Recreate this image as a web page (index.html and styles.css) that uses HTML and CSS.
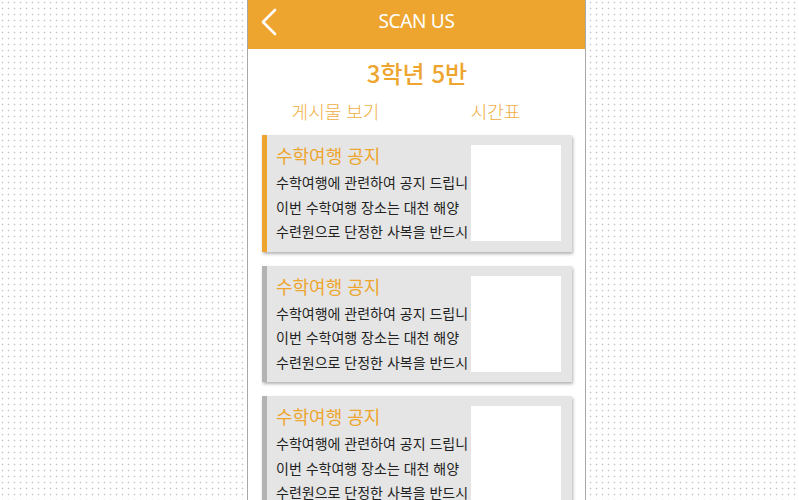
FILE: index.html
```html
<!DOCTYPE html>
<html lang="ko">
<head>
<meta charset="utf-8">
<title>SCAN US</title>
<link rel="stylesheet" href="styles.css">
</head>
<body>
<div class="phone">
  <header class="topbar">
    <button class="back" aria-label="back">
      <svg width="16" height="28" viewBox="0 0 16 28"><polyline points="14,2 2,14 14,26" fill="none" stroke="#fff" stroke-width="2.6" stroke-linecap="round" stroke-linejoin="round"/></svg>
    </button>
    <h1 class="brand">SCAN US</h1>
  </header>
  <main class="content">
    <h2 class="klass">3학년 5반</h2>
    <nav class="tabs">
      <span class="tab">게시물 보기</span>
      <span class="tab">시간표</span>
    </nav>
    <article class="card card-active">
      <div class="card-text">
        <h3 class="card-title">수학여행 공지</h3>
        <p>수학여행에 관련하여 공지 드립니</p>
        <p>이번 수학여행 장소는 대천 해양</p>
        <p>수련원으로 단정한 사복을 반드시</p>
      </div>
      <div class="thumb"></div>
    </article>
    <article class="card">
      <div class="card-text">
        <h3 class="card-title">수학여행 공지</h3>
        <p>수학여행에 관련하여 공지 드립니</p>
        <p>이번 수학여행 장소는 대천 해양</p>
        <p>수련원으로 단정한 사복을 반드시</p>
      </div>
      <div class="thumb"></div>
    </article>
    <article class="card">
      <div class="card-text">
        <h3 class="card-title">수학여행 공지</h3>
        <p>수학여행에 관련하여 공지 드립니</p>
        <p>이번 수학여행 장소는 대천 해양</p>
        <p>수련원으로 단정한 사복을 반드시</p>
      </div>
      <div class="thumb"></div>
    </article>
  </main>
</div>
</body>
</html>
```
FILE: styles.css
```css
html, body {
  margin: 0;
  padding: 0;
}
body {
  height: 500px;
  overflow: hidden;
  background-color: #fff;
  background-image: radial-gradient(circle at 2.5px 2.5px, #c4c4c4 0.7px, transparent 1.1px);
  background-size: 6px 6px;
  font-family: "Noto Sans CJK KR", "Noto Sans", sans-serif;
}
.phone {
  margin-left: 247px;
  width: 337px;
  min-height: 500px;
  background: #fff;
  border-left: 1px solid #a8a8a8;
  border-right: 1px solid #a8a8a8;
}
.topbar {
  height: 49px;
  background: #eda52f;
  display: flex;
  align-items: center;
  position: relative;
}
.back {
  position: absolute;
  left: 12px;
  top: 7px;
  border: 0;
  background: none;
  padding: 0;
  width: 18px;
  height: 30px;
  display: flex;
  align-items: center;
  justify-content: center;
}
.brand {
  flex: 1;
  margin: 0;
  text-align: center;
  color: #fff;
  font-family: "Noto Sans", sans-serif;
  font-weight: 400;
  font-size: 19px;
  letter-spacing: -0.3px;
  line-height: 24px;
  margin-top: -7px;
}
.content {
  padding: 8px 13px 0 14px;
  display: flex;
  flex-direction: column;
}
.klass {
  margin: 0 0 8px;
  text-align: center;
  color: #eda52f;
  font-size: 24px;
  font-weight: 500;
  line-height: 32px;
}
.tabs {
  display: grid;
  grid-template-columns: 1fr 1fr;
  line-height: 28px;
  margin-bottom: 10px;
}
.tab {
  text-align: center;
  color: #f1ae42;
  font-size: 18px;
  font-weight: 300;
}
.tab:first-child {
  padding-right: 8px;
}
.tab:last-child {
  padding-left: 2px;
}
.card {
  display: flex;
  background: #e5e5e5;
  border-left: 5px solid #b3b3b3;
  padding: 8px 11px 8px 9px;
  margin-bottom: 14px;
  box-shadow: 1px 2px 3px rgba(0, 0, 0, 0.3);
}
.card-active {
  border-left-color: #eda52f;
}
.card-text {
  flex: 1;
  min-width: 0;
  overflow: hidden;
  white-space: nowrap;
}
.card-title {
  margin: 0 0 3px;
  color: #eda52f;
  font-size: 18px;
  font-weight: 400;
  line-height: 24px;
}
.card-text p {
  margin: 0;
  font-size: 14px;
  line-height: 24.5px;
  color: #222;
}
.thumb {
  width: 90px;
  height: 96px;
  margin-top: 2px;
  background: #fff;
  flex-shrink: 0;
}
```
